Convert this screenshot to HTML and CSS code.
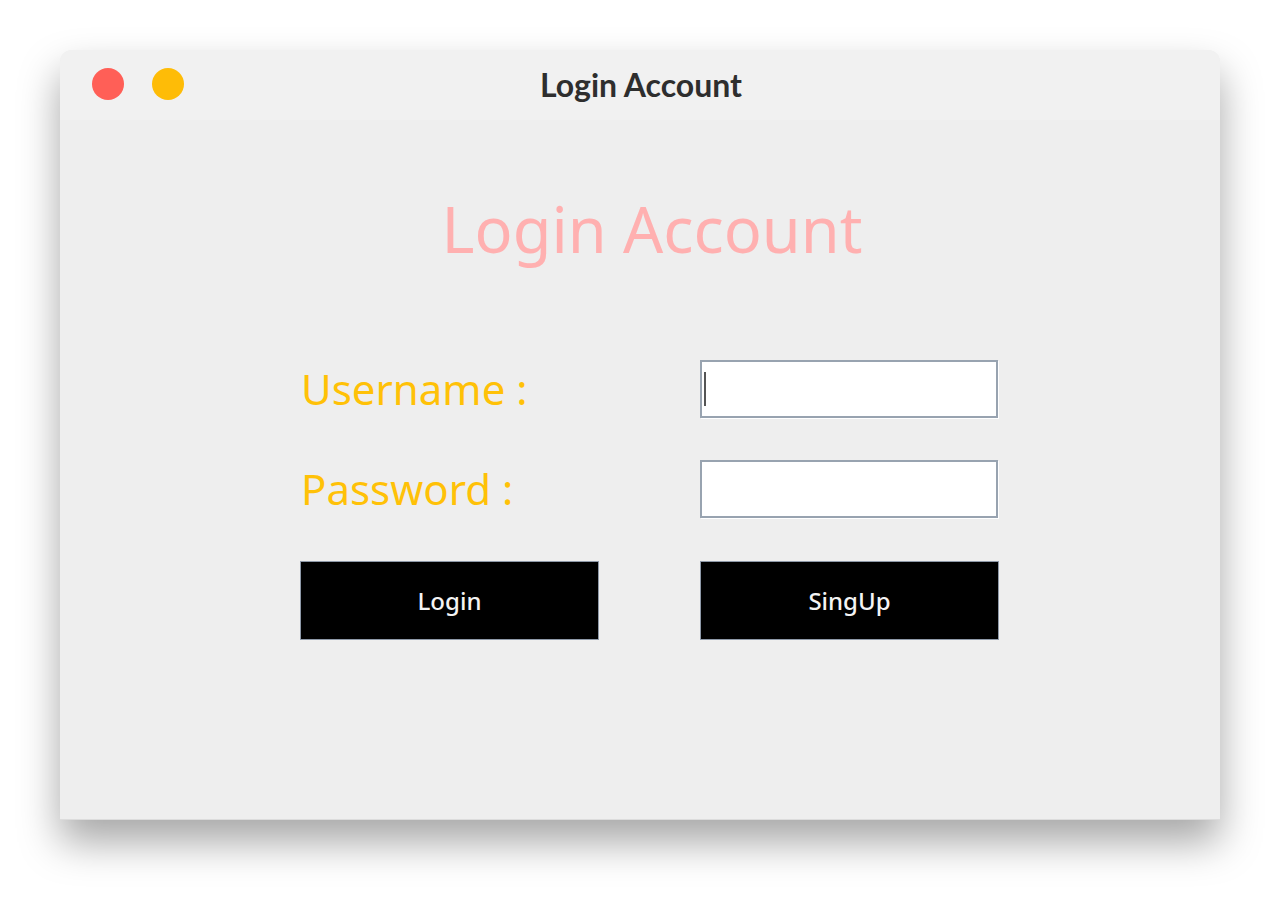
FILE: index.html
```html
<!DOCTYPE html>
<html lang="en">
<head>
    <meta charset="UTF-8">
    <meta name="viewport" content="width=device-width, initial-scale=1.0">
    <title>Login Account</title>
    <link rel="stylesheet" href="styles.css">
</head>
<body>
    <div class="window">
        <div class="titlebar">
            <div class="lights">
                <span class="light red"></span>
                <span class="light yellow"></span>
            </div>
            <div class="title">Login Account</div>
        </div>

        <div class="content">
            <h1 class="heading">Login Account</h1>

            <form class="login-form" onsubmit="return false;">
                <label class="label" for="username">Username :</label>
                <div class="field">
                    <input class="input" id="username" type="text">
                    <span class="caret"></span>
                </div>

                <label class="label" for="password">Password :</label>
                <div class="field">
                    <input class="input" id="password" type="password">
                </div>

                <button class="button" type="submit">Login</button>
                <button class="button" type="button">SingUp</button>
            </form>
        </div>
    </div>
</body>
</html>
```

FILE: styles.css
```css
body {
    margin: 0;
    padding: 50px 0 78px;
    background-color: #ffffff;
    font-family: "Noto Sans", "Open Sans", sans-serif;
}
.window {
    width: 1160px;
    height: 770px;
    margin: 0 auto;
    background-color: #eeeeee;
    border-radius: 12px 12px 0 0;
    border-bottom: 1px solid #dcdcdc;
    box-shadow: 0 22px 40px rgba(0, 0, 0, 0.35);
    box-sizing: border-box;
    overflow: hidden;
}
.titlebar {
    position: relative;
    height: 70px;
    background-color: #f1f1f1;
    display: flex;
    align-items: center;
    justify-content: center;
}
.lights {
    position: absolute;
    left: 32px;
    top: 18px;
    display: flex;
    gap: 28px;
}
.light {
    width: 32px;
    height: 32px;
    border-radius: 50%;
}
.red {
    background-color: #ff5f57;
}
.yellow {
    background-color: #febc07;
}
.title {
    font-family: "Lato", sans-serif;
    font-weight: bold;
    font-size: 32px;
    color: #2e2e2e;
    margin-top: -2px;
    padding-left: 2px;
}
.content {
    padding-top: 67px;
}
.heading {
    margin: 0;
    padding-left: 24px;
    font-size: 63px;
    line-height: 84px;
    font-weight: normal;
    color: #ffb0b0;
    text-align: center;
}
.login-form {
    width: 700px;
    margin: 89px 0 0 240px;
    display: grid;
    grid-template-columns: 400px 299px;
    grid-auto-rows: 58px;
    row-gap: 42px;
    align-items: center;
}
.label {
    font-size: 42px;
    line-height: 58px;
    color: #ffc107;
    padding-left: 1px;
}
.field {
    position: relative;
    height: 58px;
}
.input {
    width: 298px;
    height: 58px;
    box-sizing: border-box;
    border: 2px solid #98a3b0;
    background-color: #ffffff;
    box-shadow: 1px 1px 0 #ffffff;
    outline: none;
    padding: 0 6px;
    font-size: 22px;
    caret-color: transparent;
}
.caret {
    position: absolute;
    left: 4px;
    top: 12px;
    width: 2px;
    height: 34px;
    background-color: #555555;
}
.button {
    height: 79px;
    margin-top: 22px;
    width: 299px;
    background-color: #000000;
    color: #f4f4f4;
    border: 1px solid #8e99a8;
    font-family: "Noto Sans", "Open Sans", sans-serif;
    font-weight: 500;
    font-size: 24px;
    padding-top: 2px;
    cursor: pointer;
}
```
